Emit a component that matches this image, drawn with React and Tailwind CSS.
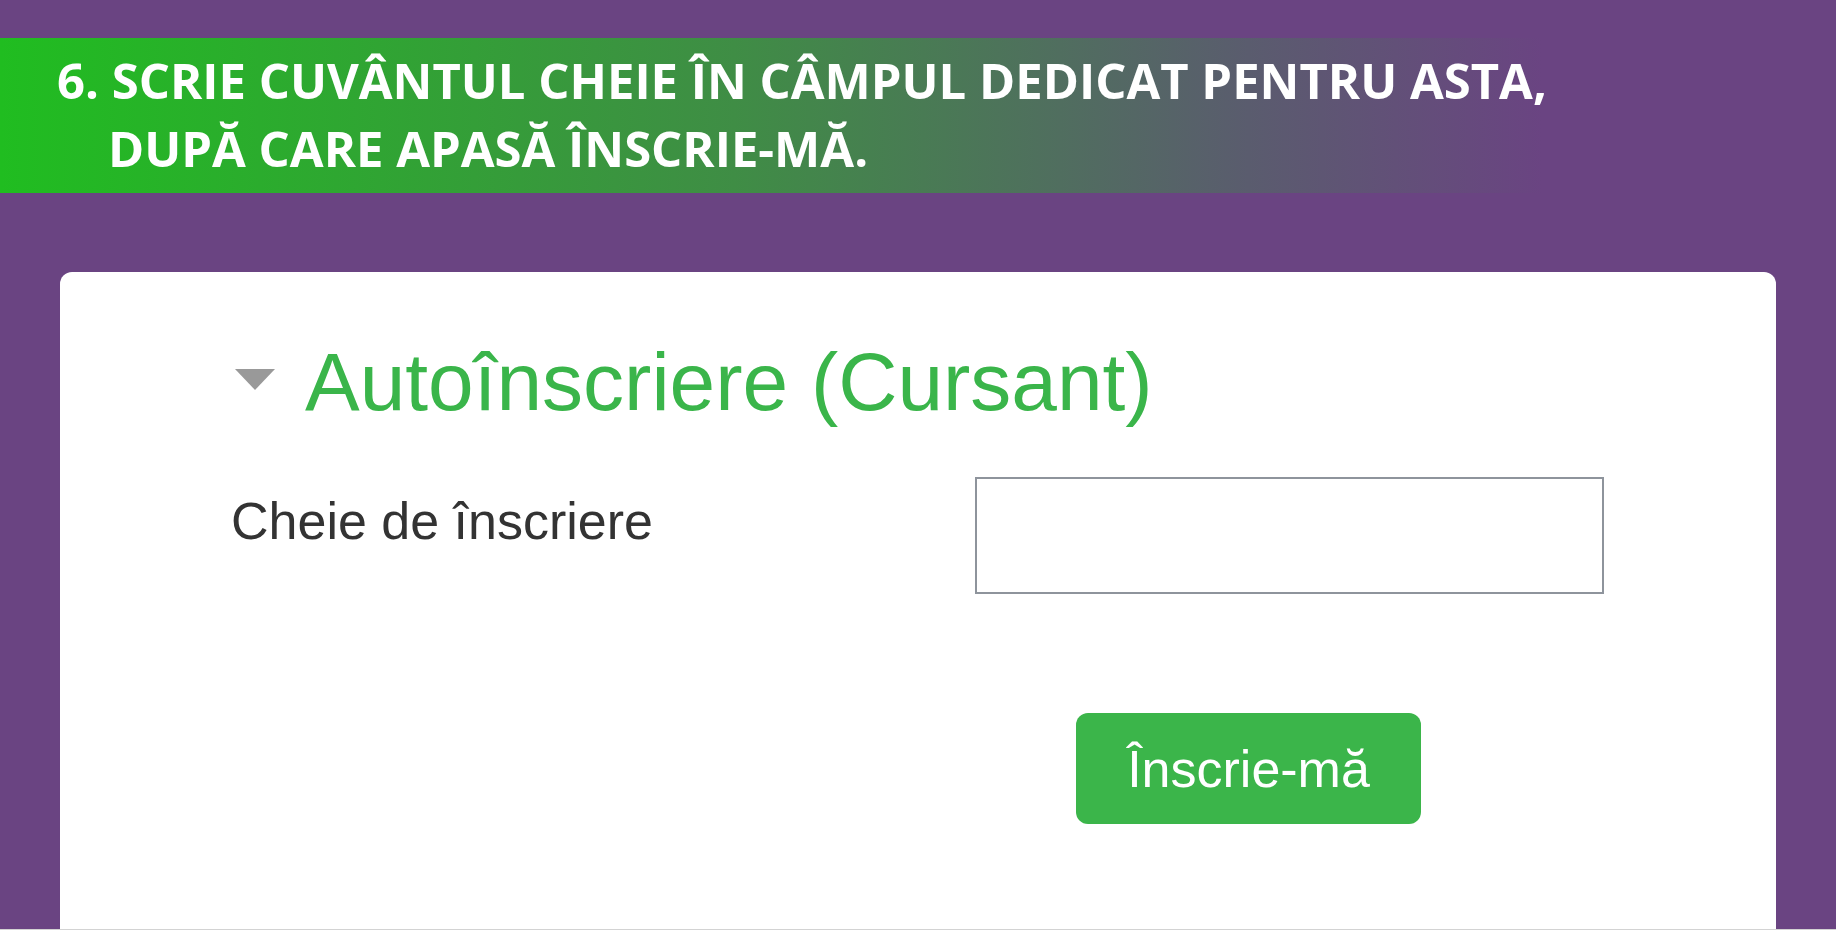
import React from "react";

const Banner = () => {
  return (
    <div className="mt-[38px] h-[155px] w-full bg-[linear-gradient(90deg,#20bd20_0%,#3f8d45_40%,#5a5c6e_68%,#6a4482_84%)] pl-[57px] pt-[8px]">
      <div
        className="text-white font-bold text-[49px] leading-[68px] font-stretch-normal whitespace-nowrap"
        style={{ fontFamily: '"Open Sans", "Liberation Sans", sans-serif' }}
      >
        <div>6. SCRIE CUVÂNTUL CHEIE ÎN CÂMPUL DEDICAT PENTRU ASTA,</div>
        <div className="pl-[51px]">DUPĂ CARE APASĂ ÎNSCRIE-MĂ.</div>
      </div>
    </div>
  );
};

const EnrolCard = () => {
  return (
    <div
      className="flex-1 mx-[60px] mt-[79px] rounded-t-[12px] bg-white pl-[171px] pt-[69px]"
      style={{ fontFamily: '"Liberation Sans", Arial, sans-serif' }}
    >
      <div className="ml-[4px] flex items-center gap-[30px]">
        <svg width="40" height="21" viewBox="0 0 40 21" className="-mt-[6px]">
          <polygon points="0,0 40,0 20,21" fill="#999999" />
        </svg>
        <h2 className="text-[82px] leading-none text-[#3ab54a] whitespace-nowrap">
          Autoînscriere (Cursant)
        </h2>
      </div>

      <div className="mt-[54px] flex items-start">
        <label className="w-[744px] pt-[18px] text-[52px] leading-none text-[#333333]">
          Cheie de înscriere
        </label>
        <input
          type="text"
          className="w-[629px] h-[117px] border-2 border-[#8e949c] bg-white outline-none"
        />
      </div>

      <div className="ml-[845px] mt-[119px]">
        <button className="w-[345px] h-[111px] rounded-[12px] bg-[#3bb54a] text-white text-[52px] leading-none">
          Înscrie-mă
        </button>
      </div>
    </div>
  );
};

export default function App() {
  return (
    <div className="w-full h-[930px] bg-[#6a4482] flex flex-col overflow-hidden">
      <Banner />
      <EnrolCard />
      <div className="h-px w-full bg-[#d3d3d3]" />
    </div>
  );
}
